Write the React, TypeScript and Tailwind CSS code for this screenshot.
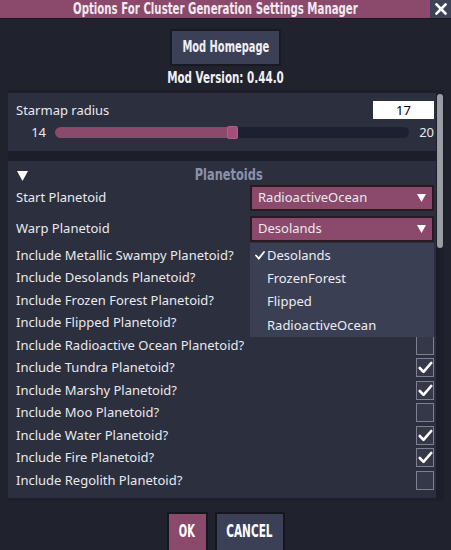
import React from "react";

const cond = { fontFamily: '"DejaVu Sans", sans-serif' };

function Check() {
  return (
    <svg width="15" height="13" viewBox="0 0 15 13" fill="none">
      <path d="M1.8 7 L5.5 10.8 L13.2 2" stroke="white" strokeWidth="2.6" strokeLinecap="round" strokeLinejoin="round" />
    </svg>
  );
}

function Box({ checked }: { checked: boolean }) {
  return (
    <div className="w-[18px] h-[19px] border-[1.5px] border-[#7d8090] bg-[#353849] flex items-center justify-center">
      {checked ? <Check /> : null}
    </div>
  );
}

function Tri() {
  return (
    <svg width="9" height="8" viewBox="0 0 9 8">
      <path d="M0 0 H9 L4.5 8 Z" fill="white" />
    </svg>
  );
}

const rows: [string, boolean | null][] = [
  ["Include Metallic Swampy Planetoid?", null],
  ["Include Desolands Planetoid?", null],
  ["Include Frozen Forest Planetoid?", null],
  ["Include Flipped Planetoid?", null],
  ["Include Radioactive Ocean Planetoid?", false],
  ["Include Tundra Planetoid?", true],
  ["Include Marshy Planetoid?", true],
  ["Include Moo Planetoid?", false],
  ["Include Water Planetoid?", true],
  ["Include Fire Planetoid?", true],
  ["Include Regolith Planetoid?", false],
];

export default function App() {
  return (
    <div
      className="w-[451px] h-[550px] bg-[#20222e] overflow-hidden flex flex-col text-[#e9e9ef]"
      style={{ fontFamily: '"Noto Sans", sans-serif' }}
    >
      {/* Title bar */}
      <div className="flex h-[19px] border-b border-[#15161e] shrink-0">
        <div
          className="flex-1 bg-[#8b4a6b] flex items-center justify-center text-[15px] font-bold text-[#f3e9f0] leading-none"
          style={cond}
        >
          <span className="inline-block whitespace-nowrap scale-x-[0.68]">Options For Cluster Generation Settings Manager</span>
        </div>
        <div className="w-[21px] bg-[#3e4358] flex items-center justify-center">
          <svg width="12" height="12" viewBox="0 0 12 12">
            <path d="M1.5 1.5 L10.5 10.5 M10.5 1.5 L1.5 10.5" stroke="white" strokeWidth="2.6" strokeLinecap="square" />
          </svg>
        </div>
      </div>

      {/* Header */}
      <div className="flex flex-col items-center shrink-0">
        <div
          className="mt-[10px] w-[111px] h-[37px] bg-[#3c4057] border-2 border-[#181a23] flex items-center justify-center text-[15px] font-bold text-[#f0f0f4]"
          style={cond}
        >
          <span className="inline-block whitespace-nowrap scale-x-[0.66]">Mod Homepage</span>
        </div>
        <div className="mt-[2px] h-[20px] flex justify-center text-[15px] font-bold leading-[20px] text-[#f0f0f4]" style={cond}>
          <span className="inline-block whitespace-nowrap scale-x-[0.69]">Mod Version: 0.44.0</span>
        </div>
      </div>

      {/* Scroll area */}
      <div className="mt-[2px] ml-[8px] mr-[7px] h-[411px] flex bg-[#1c1e29] shrink-0">
        <div className="flex-1 flex flex-col gap-[10px] pt-[3px]">
          {/* Panel 1 */}
          <div className="bg-[#2c2f3e] h-[58px] pl-[8px] pr-[2px] pt-[8px] text-[13px]">
            <div className="flex items-center h-[18px]">
              <span className="flex-1 leading-none">Starmap radius</span>
              <div className="w-[61px] h-[18px] bg-white text-black text-[13px] leading-[18px] text-center">17</div>
            </div>
            <div className="flex items-center h-[14px] mt-[6px]">
              <span className="w-[39px] text-right pr-[9px] leading-none">14</span>
              <div className="relative w-[354px] h-[11px] rounded-full bg-[#1d2030]">
                <div className="absolute left-0 top-0 h-[11px] w-[178px] rounded-l-full bg-[#8b4a6b]" />
                <div className="absolute left-[172px] top-[-1px] w-[11px] h-[13px] bg-[#a24f7a] border border-[#b45a88] rounded-[2px]" />
              </div>
              <span className="flex-1 text-right leading-none">20</span>
            </div>
          </div>

          {/* Panel 2 */}
          <div className="relative bg-[#2c2f3e] h-[337px] pl-[8px] pr-[2px] pt-[5px] text-[13px]">
            <div className="flex items-center h-[19px]">
              <div className="w-[12px] ml-[1px] flex items-center">
                <svg width="11" height="10" viewBox="0 0 11 10">
                  <path d="M0 0 H11 L5.5 10 Z" fill="white" />
                </svg>
              </div>
              <div className="flex-1 flex justify-center text-[15px] font-bold text-[#8c91aa] leading-none" style={cond}>
                <span className="inline-block whitespace-nowrap scale-x-[0.76]">Planetoids</span>
              </div>
              <div className="w-[5px]" />
            </div>
            <div className="flex items-center h-[26px]">
              <span className="flex-1">Start Planetoid</span>
              <div className="w-[184px] h-[26px] bg-[#8b4a6b] border-2 border-[#2a1822] flex items-center pl-[6px] pr-[6px]">
                <span className="flex-1">RadioactiveOcean</span>
                <Tri />
              </div>
            </div>
            <div className="flex items-center h-[26px] mt-[5px]">
              <span className="flex-1">Warp Planetoid</span>
              <div className="w-[184px] h-[26px] bg-[#8b4a6b] border-2 border-[#2a1822] flex items-center pl-[6px] pr-[6px]">
                <span className="flex-1">Desolands</span>
                <Tri />
              </div>
            </div>
            <div className="flex flex-col mt-[2px]">
              {rows.map(([label, checked]) => (
                <div key={label} className="flex items-center h-[22.5px]">
                  <span className="flex-1 leading-none">{label}</span>
                  {checked === null ? null : <Box checked={checked} />}
                </div>
              ))}
            </div>

            {/* Dropdown menu overlay */}
            <div className="absolute left-[242px] top-[82px] w-[184px] h-[94px] bg-[#3b3f54] pt-[1px] text-[#ececf2]">
              {["Desolands", "FrozenForest", "Flipped", "RadioactiveOcean"].map((o, i) => (
                <div key={o} className="flex items-center h-[23.3px]">
                  <span className="w-[17px] flex justify-end pr-[2px]">
                    {i === 0 ? (
                      <svg width="10" height="9" viewBox="0 0 10 9">
                        <path d="M1 4.5 L3.8 7.5 L9 1" stroke="white" strokeWidth="1.8" fill="none" strokeLinecap="round" />
                      </svg>
                    ) : null}
                  </span>
                  <span>{o}</span>
                </div>
              ))}
            </div>
          </div>
        </div>
        {/* Scrollbar */}
        <div className="w-[8px] flex justify-center pt-[4px]">
          <div className="w-[6px] h-[154px] rounded-full bg-[#9b9da6]" />
        </div>
      </div>

      {/* Bottom buttons */}
      <div className="flex justify-center gap-[7px] mt-[11px]">
        <div
          className="w-[41px] h-[40px] bg-[#8b4a6b] border-2 border-[#15161e] flex items-center justify-center text-[17px] font-bold text-white"
          style={cond}
        >
          <span className="inline-block whitespace-nowrap scale-x-[0.58]">OK</span>
        </div>
        <div
          className="w-[70px] h-[40px] bg-[#3c4057] border-2 border-[#15161e] flex items-center justify-center text-[17px] font-bold text-white"
          style={cond}
        >
          <span className="inline-block whitespace-nowrap scale-x-[0.62]">CANCEL</span>
        </div>
      </div>
    </div>
  );
}
